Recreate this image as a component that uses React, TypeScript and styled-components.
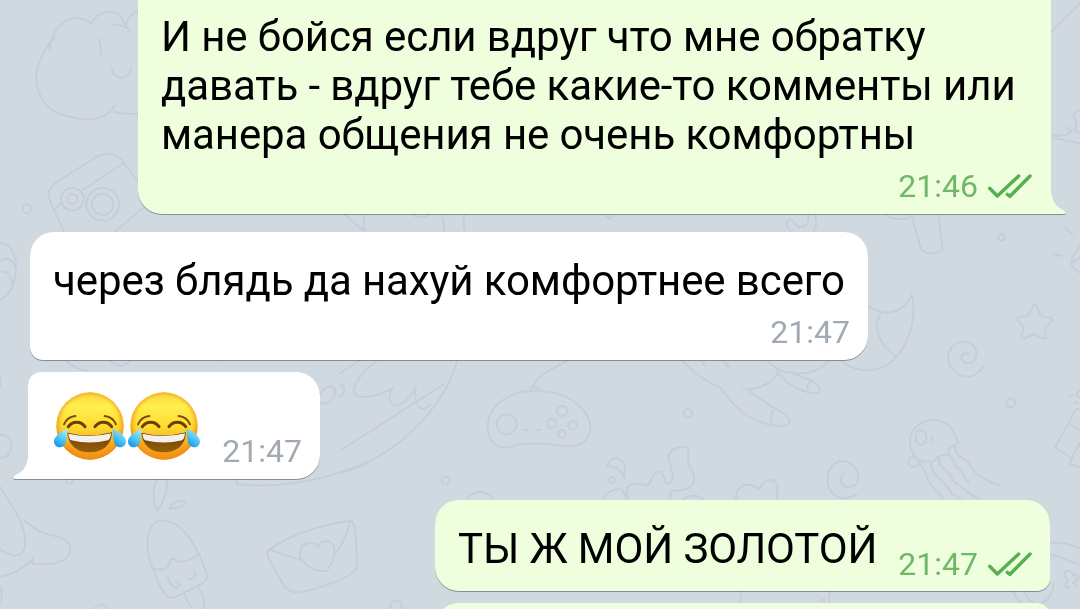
import React from "react"
import styled, { createGlobalStyle, css } from "styled-components"

const GlobalStyle = createGlobalStyle`
  * {
    box-sizing: border-box;
  }

  body {
    margin: 0;
    overflow: hidden;
    background: #d0d9e0;
  }
`

export default function App() {
	return (
		<>
			<GlobalStyle />
			<Chat>
				<Wallpaper />
				<Messages>
					<LongBubble>
						<Text>
							<Line>И не бойся если вдруг что мне обратку</Line>
							<Line>давать - вдруг тебе какие-то комменты или</Line>
							<Line>манера общения не очень комфортны</Line>
						</Text>
						<Meta $out>
							21:46
							<Checks />
						</Meta>
						<OutTail />
					</LongBubble>
					<ReplyBubble>
						<Text>
							<Line>через блядь да нахуй комфортнее всего</Line>
						</Text>
						<Meta>21:47</Meta>
					</ReplyBubble>
					<EmojiBubble>
						<EmojiRow>
							<Joy />
							<Joy />
						</EmojiRow>
						<Meta>21:47</Meta>
						<InTail />
					</EmojiBubble>
					<GoldBubble>
						<Text>
							<Line>ТЫ Ж МОЙ ЗОЛОТОЙ</Line>
						</Text>
						<Meta $out>
							21:47
							<Checks />
						</Meta>
					</GoldBubble>
					<NextBubble />
				</Messages>
			</Chat>
		</>
	)
}

function Checks() {
	return (
		<CheckIcon viewBox="0 0 132 72">
			<path d="M5 43L28 66L92 6M58 61L66 67L126 6" />
		</CheckIcon>
	)
}

function OutTail() {
	return (
		<RightTail viewBox="0 0 18 30">
			<path d="M0 0H2C2 16 6 23 16 27Q17.5 29 15.500 30H0Z" fill="#efffde" />
		</RightTail>
	)
}

function InTail() {
	return (
		<LeftTail viewBox="0 0 18 30">
			<path d="M18 0H16.500C16.500 16 12 23 2 27Q0.500 29 2.500 30H18Z" fill="#fff" />
		</LeftTail>
	)
}

function Joy() {
	return (
		<Emoji viewBox="0 0 216 204">
			<defs>
				<linearGradient id="face" x1="0" y1="0" x2="0" y2="1">
					<stop offset="0" stopColor="#fbd338" />
					<stop offset="0.200" stopColor="#fff04e" />
					<stop offset="0.500" stopColor="#fddc31" />
					<stop offset="0.750" stopColor="#f9ae21" />
					<stop offset="1" stopColor="#f08c14" />
				</linearGradient>
				<radialGradient id="rim" cx="0.5" cy="0.48" r="0.52">
					<stop offset="0.800" stopColor="#f59a1c" stopOpacity="0" />
					<stop offset="1" stopColor="#ee8a13" stopOpacity="0.900" />
				</radialGradient>
				<linearGradient id="tear" x1="0.800" y1="0" x2="0.300" y2="1">
					<stop offset="0" stopColor="#a5ecf8" />
					<stop offset="0.500" stopColor="#56c8f5" />
					<stop offset="1" stopColor="#1795e6" />
				</linearGradient>
				<linearGradient id="mouth" x1="0" y1="0" x2="0" y2="1">
					<stop offset="0" stopColor="#6d3c05" />
					<stop offset="1" stopColor="#96600a" />
				</linearGradient>
			</defs>
			<circle cx="108" cy="102" r="101" fill="url(#face)" />
			<circle cx="108" cy="102" r="101" fill="url(#rim)" />
			<path d="M30 97C36 82 48 74 64 72M186 97C180 82 168 74 152 72" fill="none" stroke="#7d4a08" strokeWidth="6" strokeLinecap="round" />
			<path d="M43 104C55 86 81 86 93 104M123 104C135 86 161 86 173 104" fill="none" stroke="#6e3d06" strokeWidth="9" strokeLinecap="round" />
			<path d="M40 122Q108 139 174 121C172 162 144 181 108 181C70 181 44 162 40 122Z" fill="url(#mouth)" />
			<path d="M43 125Q108 140 171 124Q170 140 162 145Q108 158 52 145Q44 140 43 125Z" fill="#f3f0ee" />
			<path d="M41 111C17 118 -1 136 0 150C2 170 31 172 36 151C39 139 38 125 41 111Z" fill="url(#tear)" />
			<path d="M175 111C199 118 217 136 216 150C214 170 185 172 180 151C177 139 178 125 175 111Z" fill="url(#tear)" />
		</Emoji>
	)
}

// doodles are drawn at three units per pixel
function Wallpaper() {
	return (
		<Doodles viewBox="0 0 3240 1827">
			<path d="M165 110C120 160 100 220 112 262C125 310 150 335 200 348C260 365 310 365 345 318M340 335C370 345 400 342 440 340M148 150C155 90 190 50 240 55C255 58 268 63 275 72C285 45 310 33 330 35C360 40 370 55 378 80M335 73C360 73 380 80 390 92M378 75C385 50 395 40 415 32M297 117C303 135 302 150 304 163M335 205C340 240 385 245 395 203" />
			<path d="M150 600C138 580 150 565 165 550L290 470C320 455 350 460 370 485L430 570M372 488L248 570M185 608L162 628C155 620 152 610 150 600M160 625L195 700M345 695L440 615" />
			<circle cx="217" cy="597" r="34" />
			<circle cx="217" cy="597" r="15" />
			<circle cx="308" cy="613" r="49" />
			<circle cx="308" cy="613" r="32" />
			<circle cx="81" cy="626" r="13" />

			<g transform="translate(0 600)">
				<path d="M0 130C40 130 55 180 45 230C38 270 20 290 0 300M0 185C18 165 35 180 47 200M0 215C25 210 32 225 38 255M0 705C20 700 35 715 33 740C30 765 15 775 0 775M198 482C220 500 240 510 262 512M330 482C350 500 370 505 390 482M0 530C2 545 2 550 0 560" />
				<circle cx="208" cy="841" r="10" />
			</g>

			<g transform="translate(1020 570)">
				<path d="M15 75L70 122M75 75C68 95 72 110 75 122M218 75C230 84 255 84 265 75M305 75C312 95 310 110 312 122M375 75C368 95 370 110 375 122M795 72C798 88 820 88 822 72M1355 122C1335 115 1335 90 1352 88C1365 92 1362 110 1382 112C1400 110 1412 90 1402 75M1425 75C1432 95 1430 110 1422 122" />
			</g>

			<g transform="translate(2520 600)">
				<path d="M140 45C160 62 195 60 215 47M215 47L242 143C250 165 290 165 308 148L295 47M85 318C130 350 190 345 216 283C230 360 210 420 170 470C130 515 70 525 8 488M122 342C95 380 120 440 170 470M675 82L698 103M638 162L666 168M720 140C695 165 688 190 700 205L720 218M695 190L720 172" />
				<circle cx="485" cy="112" r="10" />
				<circle cx="512" cy="608" r="13" />
				<path d="M584 314C592 318 598 345 606 349L635 355C640 360 638 365 615 382L617 410C614 420 608 418 582 402L553 416C545 418 543 412 551 381L531 360C528 352 535 350 562 348C570 340 577 316 584 314Z" />
				<path d="M430 500C410 535 365 540 340 510C310 475 325 430 370 425C405 423 420 460 402 482C385 500 362 485 365 470C368 460 378 458 386 462" />
				<path d="M238 782C205 760 205 710 220 690C245 655 300 650 330 680C345 695 345 710 350 715C360 725 350 735 342 737C330 740 325 745 325 765C300 765 290 770 283 783C265 790 255 783 238 782C238 805 210 805 207 795C200 785 212 770 218 770" />
				<path d="M228 695C245 680 265 700 258 720C250 745 225 738 228 705M277 708Q277 722 281 725M345 740C345 760 358 770 370 775C395 790 395 815 415 825C435 830 440 850 482 856M325 765C345 775 340 800 358 808C372 815 370 838 387 846M295 770C300 790 298 800 315 808C330 820 335 845 355 855C380 865 380 885 420 895M272 785C275 805 275 820 293 830C310 850 330 865 335 880L362 897M240 785C240 805 260 810 262 835C270 860 290 865 308 895" />
				<path d="M720 628H708L645 742L695 775L720 728M685 672L720 690M695 775L690 792L720 803M720 570C708 580 708 588 720 595M690 588L697 584M703 610L710 606" />
				<path d="M50 885C5 905 -30 890 -36 850C-42 800 -10 778 20 785C60 800 68 850 35 860C5 865 -5 840 10 822" />
			</g>

			<g transform="translate(1020 1020)">
				<path d="M0 100L60 60M110 62C75 90 40 125 42 155C50 185 120 165 158 145C140 170 150 195 165 197C195 195 215 165 228 142C220 170 228 205 250 207C265 205 270 195 272 195M352 60C330 150 260 240 180 305C100 365 40 390 0 400M312 132L0 332" />
				<path d="M0 170C20 155 15 135 0 135M-60 190C-20 195 0 150 -25 138C-55 138 -75 180 -60 190M-355 62C-362 50 -355 45 -345 52" />
				<path d="M443 265C440 190 520 150 590 152C670 155 740 190 752 260C750 310 710 322 670 318C620 310 560 305 520 318C480 330 445 315 443 265ZM572 152C570 140 595 135 598 152M580 138C600 95 640 90 680 62" />
				<circle cx="500" cy="253" r="30" />
				<circle cx="666" cy="213" r="15" />
				<circle cx="635" cy="250" r="14" />
				<circle cx="698" cy="256" r="13" />
				<circle cx="666" cy="282" r="12" />
				<path d="M550 270H564M592 270H600" />
				<circle cx="317" cy="422" r="12" />
				<circle cx="1043" cy="220" r="13" />
				<circle cx="815" cy="420" r="9" />
				<path d="M380 478C400 448 440 448 460 478M802 378C805 345 850 345 855 385L852 415C845 385 825 380 802 378ZM790 478C800 455 830 440 850 452L858 475M865 475C850 440 870 420 920 437C940 430 930 395 960 395C975 405 975 430 985 432C1015 420 985 370 985 350C990 325 1020 318 1040 322C1055 340 1030 360 1060 400C1070 440 1050 452 995 452L990 478M1030 478Q1060 455 1090 478" />
				<path d="M1028 62C1060 100 1110 130 1145 145M1085 62L1093 75M1150 62L1168 85" />
			</g>

			<g transform="translate(2100 1020)">
				<path d="M65 148C100 200 150 245 215 255C245 260 262 260 270 245C265 220 230 210 215 200L140 148H128M142 148C190 145 220 120 235 98M225 205Q210 220 213 252M230 95C270 140 310 160 350 160C370 155 355 130 330 120L270 97C310 105 350 100 385 65M335 122Q315 135 325 153M205 65C225 85 245 98 270 98" />
				<path d="M108 478C105 430 150 425 178 448C195 410 235 410 232 450L230 478" />
				<path d="M1050 608C1100 605 1130 620 1150 628M1050 645C1090 650 1110 665 1140 675M940 755C950 775 955 785 970 792M975 755C978 770 985 785 1010 792C1045 790 1060 760 1060 730M1093 708C1090 690 1115 685 1120 708C1135 700 1142 712 1130 720L1120 728L1128 740M1093 708L1105 722C1090 735 1095 748 1110 740M125 755L120 790M388 755V790M360 782L375 778" />
			</g>

			<g transform="translate(0 1380)">
				<path d="M0 80C35 140 80 190 75 255C70 300 30 290 0 268M72 180C110 215 145 225 180 232C220 245 220 280 190 300C160 315 120 315 95 310L100 295C70 325 40 345 0 350M0 380Q12 400 0 425" />
				<path d="M470 62C455 90 460 130 472 155C490 125 505 90 500 62M508 148C515 125 540 115 555 130C550 145 530 140 508 148Z" />
				<path d="M458 325C430 260 440 185 485 181C540 180 575 240 600 290L622 345C625 360 610 370 590 380L530 410C510 420 500 408 490 395C475 370 465 345 458 325C480 332 500 330 505 315C510 295 520 290 530 303C550 310 575 300 600 280M503 350C508 370 515 380 528 383C542 380 540 370 530 362M582 332C590 350 580 362 565 356M553 402C560 425 572 435 580 450M598 385C612 405 612 425 615 450M285 445C292 430 315 430 322 445" />
				<path d="M803 272C860 230 950 195 1050 183C1065 185 1070 210 1070 320C1070 345 960 390 890 397C870 398 855 385 845 365L803 290ZM806 268L900 300M1050 183C1040 230 1020 265 1003 285M955 262C945 240 905 245 900 275C895 310 940 335 980 333C1000 305 1005 290 1003 262C995 235 955 240 955 262Z" />
				<path d="M710 62L712 72C760 78 810 78 860 72C960 60 1040 35 1120 0M1172 447C1165 425 1185 418 1200 425C1212 435 1205 445 1198 447" />
			</g>

			<path d="M3155 95L3240 10M3155 412L3240 430M3155 404C3180 412 3200 405 3215 395L3200 382M3240 330C3215 340 3220 350 3230 370C3225 385 3215 395 3240 398" />
		</Doodles>
	)
}

const Chat = styled.main`
  position: relative;
  width: 1080px;
  height: 609px;
  overflow: hidden;
  background: #d0d9e0;
  font-family: Roboto, "Liberation Sans", sans-serif;
`

const Doodles = styled.svg`
  position: absolute;
  inset: 0;
  width: 1080px;
  height: 609px;
  fill: none;
  stroke: #c5ccdc;
  stroke-width: 5.5;
  stroke-linecap: round;
  stroke-linejoin: round;
`

const Messages = styled.div`
  position: relative;
  display: flex;
  flex-direction: column;
`

const Bubble = styled.div`
  position: relative;
  display: flex;
  flex-shrink: 0;
  background: #fff;
  filter: drop-shadow(0 1px 0.7px rgba(62, 82, 92, 0.55));
`

const outgoing = css`
  background: #efffde;
`

const Text = styled.div`
  color: #000;
  font-size: 42px;
  line-height: 49px;
  letter-spacing: -0.1px;
  white-space: nowrap;
`

const Line = styled.div`
  width: max-content;
`

const LongBubble = styled(Bubble)`
  ${outgoing}
  flex-direction: column;
  justify-content: space-between;
  width: 913px;
  height: 214px;
  margin-left: 138px;
  padding: 12px 19px 9px 23px;
  border-radius: 0 0 0 24px;
`

const ReplyBubble = styled(Bubble)`
  flex-direction: column;
  justify-content: space-between;
  width: 838px;
  height: 128px;
  margin: 18px 0 0 30px;
  padding: 24px 18px 9px 23px;
  border-radius: 24px 24px 24px 13px;
`

const EmojiBubble = styled(Bubble)`
  align-items: flex-end;
  justify-content: space-between;
  width: 292px;
  height: 107px;
  margin: 12px 0 0 28px;
  padding: 0 18px 9px 26px;
  border-radius: 13px 24px 24px 0;
`

const GoldBubble = styled(Bubble)`
  ${outgoing}
  align-items: flex-end;
  justify-content: space-between;
  width: 615px;
  height: 91px;
  margin: 21px 0 0 435px;
  padding: 0 18px 8px 23px;
  border-radius: 24px 24px 13px 24px;

  ${Text} {
    margin-bottom: 10px;
  }
`

const NextBubble = styled(Bubble)`
  ${outgoing}
  width: 615px;
  height: 91px;
  margin: 12px 0 0 435px;
  border-radius: 24px 13px 13px 24px;
`

const Meta = styled.div<{ $out?: boolean }>`
  display: flex;
  align-items: center;
  align-self: flex-end;
  gap: 10px;
  color: ${(p) => (p.$out ? "#70b768" : "#a1aab3")};
  font-size: 32px;
  line-height: 38px;
`

const CheckIcon = styled.svg`
  width: 44px;
  height: 24px;
  fill: none;
  stroke: #55b04f;
  stroke-width: 10.5;
  stroke-linecap: round;
  stroke-linejoin: round;
`

const EmojiRow = styled.div`
  display: flex;
  gap: 2px;
  margin-bottom: 10px;
`

const Emoji = styled.svg`
  width: 72px;
  height: 68px;
`

const Tail = styled.svg`
  position: absolute;
  bottom: 0;
  width: 18px;
  height: 30px;
`

const RightTail = styled(Tail)`
  right: -16px;
`

const LeftTail = styled(Tail)`
  left: -16px;
`
